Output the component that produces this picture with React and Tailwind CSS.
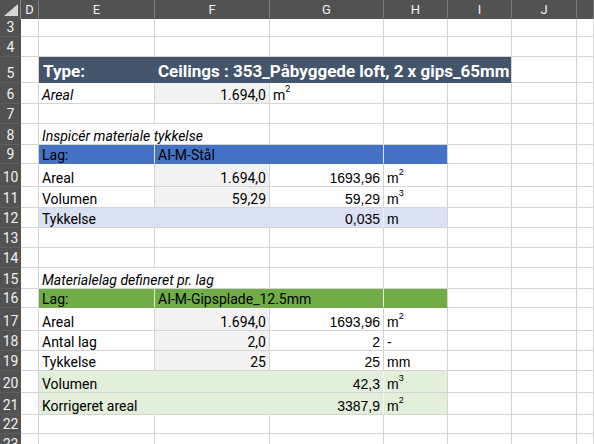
import clsx from 'clsx'

const aptos = "font-['Roboto',sans-serif] text-[14px] leading-[16px]"
const arial = "font-['Liberation_Sans',Arial,sans-serif] text-[14px] leading-[16px]"

// one spreadsheet cell, bottom aligned like Excel
const Cell = ({ className, children }) => (
    <div
        className={clsx(
            'flex items-end whitespace-nowrap overflow-visible border-r border-b border-[#d4d4d4] text-black',
            className
        )}
    >
        {children}
    </div>
)

const Sup = ({ u, sup }) => (
    <span>
        {u}
        {sup && <span className="relative -top-[8px] text-[9px] leading-none">{sup}</span>}
    </span>
)

const Unit = ({ u, sup, font = arial, className }) => (
    <Cell className={clsx(font, 'pl-[3px]', className)}>
        <Sup u={u} sup={sup} />
    </Cell>
)

const Empty = ({ n = 1 }) => Array.from({ length: n }).map((_, i) => <Cell key={i} />)

const Txt = ({ children, className }) => (
    <Cell className={clsx(aptos, 'pl-[3px]', className)}>{children}</Cell>
)

const Num = ({ children, className, font = aptos }) => (
    <Cell className={clsx(font, 'justify-end pr-[3px]', className)}>{children}</Cell>
)

const rows = [
    { n: 3, cells: <Empty n={8} /> },
    { n: 4, cells: <Empty n={8} /> },
    {
        n: 5,
        cells: (
            <>
                <Cell />
                <Cell className="bg-[#44546a] border-r-[#44546a] border-b-[#44546a] pl-[4px] pb-[1px] font-['Roboto',sans-serif] font-bold text-[17px] leading-[20px] text-white">
                    Type:
                </Cell>
                <Cell className="col-span-4 bg-[#44546a] border-b-[#44546a] pl-[3px] pb-[1px] font-['Roboto',sans-serif] font-bold text-[17px] leading-[20px] text-white">
                    Ceilings : 353_Påbyggede loft, 2 x gips_65mm
                </Cell>
                <Empty n={2} />
            </>
        ),
    },
    {
        n: 6,
        cells: (
            <>
                <Cell />
                <Txt className="italic">Areal</Txt>
                <Num className="bg-[#f2f2f2]">1.694,0</Num>
                <Unit u="m" sup="2" font={aptos} />
                <Empty n={4} />
            </>
        ),
    },
    { n: 7, cells: <Empty n={8} /> },
    {
        n: 8,
        cells: (
            <>
                <Cell />
                <Txt className="col-span-2 italic">Inspicér materiale tykkelse</Txt>
                <Empty n={5} />
            </>
        ),
    },
    {
        n: 9,
        cells: (
            <>
                <Cell />
                <Txt className="bg-[#4472c4] border-r-[#dfe6f3] border-b-[#4472c4]">Lag:</Txt>
                <Txt className="bg-[#4472c4] border-r-[#4472c4] border-b-[#4472c4]">AI-M-Stål</Txt>
                <Cell className="bg-[#4472c4] border-r-[#dfe6f3] border-b-[#4472c4]" />
                <Cell className="bg-[#4472c4] border-b-[#4472c4]" />
                <Empty n={3} />
            </>
        ),
    },
    {
        n: 10,
        cells: (
            <>
                <Cell />
                <Txt>Areal</Txt>
                <Num className="bg-[#f2f2f2]">1.694,0</Num>
                <Num font={arial}>1693,96</Num>
                <Unit u="m" sup="2" />
                <Empty n={3} />
            </>
        ),
    },
    {
        n: 11,
        cells: (
            <>
                <Cell />
                <Txt>Volumen</Txt>
                <Num className="bg-[#f2f2f2]">59,29</Num>
                <Num font={arial}>59,29</Num>
                <Unit u="m" sup="3" />
                <Empty n={3} />
            </>
        ),
    },
    {
        n: 12,
        cells: (
            <>
                <Cell />
                <Txt className="bg-[#d9e1f2] border-r-[#d9e1f2]">Tykkelse</Txt>
                <Cell className="bg-[#d9e1f2] border-r-[#d9e1f2]" />
                <Num font={arial} className="bg-[#d9e1f2] border-r-[#eef1f8]">0,035</Num>
                <Unit u="m" className="bg-[#d9e1f2]" />
                <Empty n={3} />
            </>
        ),
    },
    { n: 13, cells: <Empty n={8} /> },
    { n: 14, cells: <Empty n={8} /> },
    {
        n: 15,
        cells: (
            <>
                <Cell />
                <Txt className="col-span-2 italic">Materialelag defineret pr. lag</Txt>
                <Empty n={5} />
            </>
        ),
    },
    {
        n: 16,
        cells: (
            <>
                <Cell />
                <Txt className="bg-[#70ad47] border-r-[#e4efdc] border-b-[#70ad47]">Lag:</Txt>
                <Txt className="col-span-2 bg-[#70ad47] border-r-[#e4efdc] border-b-[#70ad47]">
                    AI-M-Gipsplade_12.5mm
                </Txt>
                <Cell className="bg-[#70ad47] border-b-[#70ad47]" />
                <Empty n={3} />
            </>
        ),
    },
    {
        n: 17,
        cells: (
            <>
                <Cell />
                <Txt>Areal</Txt>
                <Num className="bg-[#f2f2f2]">1.694,0</Num>
                <Num font={arial}>1693,96</Num>
                <Unit u="m" sup="2" />
                <Empty n={3} />
            </>
        ),
    },
    {
        n: 18,
        cells: (
            <>
                <Cell />
                <Txt>Antal lag</Txt>
                <Num className="bg-[#f2f2f2]">2,0</Num>
                <Num font={arial}>2</Num>
                <Unit u="-" />
                <Empty n={3} />
            </>
        ),
    },
    {
        n: 19,
        cells: (
            <>
                <Cell />
                <Txt>Tykkelse</Txt>
                <Num className="bg-[#f2f2f2]">25</Num>
                <Num font={arial}>25</Num>
                <Unit u="mm" />
                <Empty n={3} />
            </>
        ),
    },
    {
        n: 20,
        cells: (
            <>
                <Cell />
                <Txt className="bg-[#e2efda] border-r-[#e2efda]">Volumen</Txt>
                <Cell className="bg-[#e2efda] border-r-[#e2efda]" />
                <Num font={arial} className="bg-[#e2efda] border-r-[#f1f7ec]">42,3</Num>
                <Unit u="m" sup="3" className="bg-[#e2efda]" />
                <Empty n={3} />
            </>
        ),
    },
    {
        n: 21,
        cells: (
            <>
                <Cell />
                <Txt className="bg-[#e2efda] border-r-[#e2efda]">Korrigeret areal</Txt>
                <Cell className="bg-[#e2efda] border-r-[#e2efda]" />
                <Num font={arial} className="bg-[#e2efda] border-r-[#f1f7ec]">3387,9</Num>
                <Unit u="m" sup="2" className="bg-[#e2efda]" />
                <Empty n={3} />
            </>
        ),
    },
    { n: 22, cells: <Empty n={8} /> },
    { n: 23, cells: <Empty n={8} /> },
]

const letters = ['D', 'E', 'F', 'G', 'H', 'I', 'J', '']

const App = () => {
    return (
        <div className="h-[444px] w-[594px] overflow-hidden bg-white">
            <div className="grid grid-cols-[21px_18px_116px_115px_114px_64px_64px_65px_1fr] grid-rows-[19px_18px_20px_26px_21px_20px_21px_19px_23px_21px_20px_20px_20px_21px_19px_23px_20px_20px_22px_22px_19px_20px]">
                {/* hjørne med trekant */}
                <div className="relative bg-[#525252] border-r border-[#8a8a8a]">
                    <div className="absolute right-[2px] bottom-[3px] h-[12px] w-[14px] bg-[#d6d6d6] [clip-path:polygon(100%_0,100%_100%,0_100%)]" />
                </div>
                {letters.map((l, i) => (
                    <div
                        key={i}
                        className="flex items-center justify-center bg-[#525252] border-r border-[#7a7a7a] font-['Roboto',sans-serif] text-[13px] text-[#f0f0f0]"
                    >
                        {l}
                    </div>
                ))}

                {rows.map((r) => (
                    <div key={r.n} className="contents">
                        <div className="flex items-end justify-center pb-[1px] bg-[#525252] border-b border-[#5e5e5e] font-['Roboto',sans-serif] text-[14px] leading-[16px] text-[#f0f0f0]">
                            {r.n}
                        </div>
                        {r.cells}
                    </div>
                ))}
            </div>
        </div>
    )
}

export default App
